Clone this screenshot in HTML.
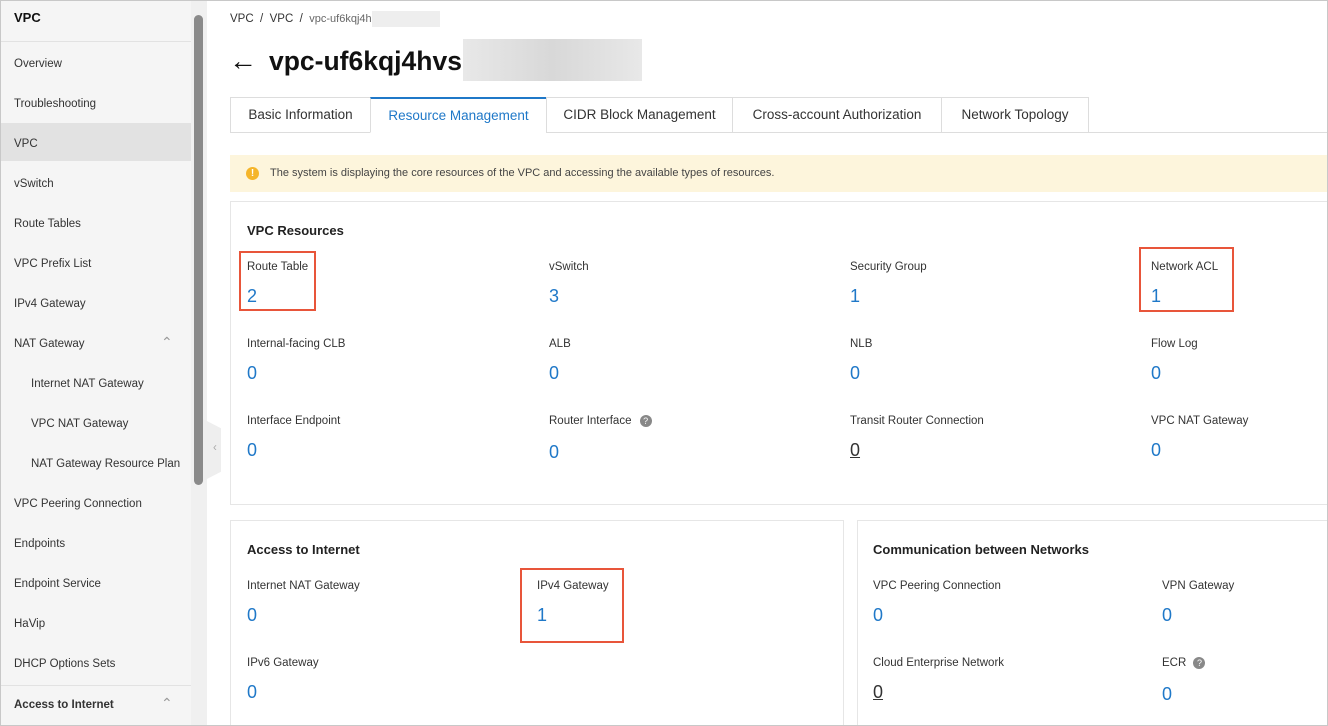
<!DOCTYPE html>
<html><head><style>
*{box-sizing:border-box;margin:0;padding:0}
html,body{width:1328px;height:726px;overflow:hidden}
body{font-family:"Liberation Sans",sans-serif;background:#fff;color:#333}
#w{position:relative;width:1328px;height:726px;overflow:hidden;border:1px solid #c8c8c8}
.sb{position:absolute;left:0;top:0;width:190px;height:726px;background:#f5f5f5}
.sb div{position:absolute;left:13px;font-size:11.5px;color:#333}
.sel{position:absolute;left:0;top:122px;width:190px;height:38px;background:#e2e2e2}
.scroll{position:absolute;left:193px;top:14px;width:9px;height:470px;background:#8a8a8a;border-radius:5px}
.track{position:absolute;left:190px;top:0;width:16px;height:726px;background:#f0f0f0}
.a{position:absolute;font-size:11.5px;white-space:nowrap}
.card{position:absolute;border:1px solid #e6e6e6;background:#fff}
.l{position:absolute;font-size:11.5px;color:#333;white-space:nowrap}
.n{position:absolute;font-size:18px;color:#1f78c8}
.h{position:absolute;font-size:13px;font-weight:bold;color:#222}
.red{position:absolute;border:2px solid #e8553a}
.tab{position:absolute;top:96px;height:36px;border:1px solid #ddd;font-size:13.5px;color:#333;text-align:center;line-height:34px;background:#fff;white-space:nowrap}
</style></head><body><div id="w">
<div class="sb">
<div style="top:9px;font-weight:bold;font-size:13px;color:#111">VPC</div>
<div style="left:0;top:40px;width:190px;height:1px;background:#e2e2e2"></div>
<span class="sel"></span>
<div style="top:57px">Overview</div>
<div style="top:97px">Troubleshooting</div>
<div style="top:137px">VPC</div>
<div style="top:177px">vSwitch</div>
<div style="top:217px">Route Tables</div>
<div style="top:257px">VPC Prefix List</div>
<div style="top:297px">IPv4 Gateway</div>
<div style="top:337px">NAT Gateway</div>
<div style="top:333px;left:160px;font-size:14px;color:#999">&#8963;</div>
<div style="top:377px;left:30px">Internet NAT Gateway</div>
<div style="top:417px;left:30px">VPC NAT Gateway</div>
<div style="top:457px;left:30px">NAT Gateway Resource Plan</div>
<div style="top:497px">VPC Peering Connection</div>
<div style="top:537px">Endpoints</div>
<div style="top:577px">Endpoint Service</div>
<div style="top:617px">HaVip</div>
<div style="top:657px">DHCP Options Sets</div>
<div style="left:0;top:684px;width:190px;height:1px;background:#e2e2e2"></div>
<div style="top:698px;font-weight:bold">Access to Internet</div>
<div style="top:694px;left:160px;font-size:14px;color:#999">&#8963;</div>
</div>
<div class="track"></div>
<div class="scroll"></div>
<div style="position:absolute;left:202px;top:418px;width:18px;height:62px;background:#eee;clip-path:polygon(0 0,100% 15%,100% 85%,0 100%)"></div>
<div class="a" style="left:212px;top:441px;color:#aaa">&lsaquo;</div>
<div class="a" style="left:229px;top:10px;color:#333;font-size:11.5px">VPC &nbsp;/&nbsp; VPC &nbsp;/&nbsp; <span style="color:#666;font-size:11px">vpc-uf6kqj4h</span><span style="display:inline-block;vertical-align:middle;width:68px;height:16px;background:#eee"></span></div>
<div class="a" style="left:228px;top:44px;font-size:28px;font-weight:bold;color:#111">&larr;</div>
<div class="a" style="left:268px;top:45px;font-size:26.5px;font-weight:bold;color:#111">vpc-uf6kqj4hvs</div>
<div style="position:absolute;left:462px;top:38px;width:179px;height:42px;background:linear-gradient(90deg,#e8e8e8,#d8d8d8 50%,#e8e8e8)"></div>
<div class="tab" style="left:229px;width:141px">Basic Information</div>
<div class="tab" style="left:369px;width:177px;border-top:2px solid #1f78c8;border-bottom-color:#fff;color:#1f78c8">Resource Management</div>
<div class="tab" style="left:545px;width:187px">CIDR Block Management</div>
<div class="tab" style="left:731px;width:210px">Cross-account Authorization</div>
<div class="tab" style="left:940px;width:148px">Network Topology</div>
<div style="position:absolute;left:1087px;top:131px;width:241px;height:1px;background:#ddd"></div>
<div style="position:absolute;left:229px;top:154px;width:1099px;height:37px;background:#fdf5dc"></div>
<div style="position:absolute;left:245px;top:166px;width:13px;height:13px;border-radius:50%;background:#f5b52a;color:#fff;font-size:10px;font-weight:bold;text-align:center;line-height:13px">!</div>
<div class="a" style="left:269px;top:166px;font-size:11px;color:#444">The system is displaying the core resources of the VPC and accessing the available types of resources.</div>
<div class="card" style="left:229px;top:200px;width:1105px;height:304px"></div>
<div class="h" style="left:246px;top:222px">VPC Resources</div>
<div class="l" style="left:246px;top:260px">Route Table</div><div class="n" style="left:246px;top:285px">2</div>
<div class="l" style="left:548px;top:260px">vSwitch</div><div class="n" style="left:548px;top:285px">3</div>
<div class="l" style="left:849px;top:260px">Security Group</div><div class="n" style="left:849px;top:285px">1</div>
<div class="l" style="left:1150px;top:260px">Network ACL</div><div class="n" style="left:1150px;top:285px">1</div>
<div class="l" style="left:246px;top:337px">Internal-facing CLB</div><div class="n" style="left:246px;top:362px">0</div>
<div class="l" style="left:548px;top:337px">ALB</div><div class="n" style="left:548px;top:362px">0</div>
<div class="l" style="left:849px;top:337px">NLB</div><div class="n" style="left:849px;top:362px">0</div>
<div class="l" style="left:1150px;top:337px">Flow Log</div><div class="n" style="left:1150px;top:362px">0</div>
<div class="l" style="left:246px;top:414px">Interface Endpoint</div><div class="n" style="left:246px;top:439px">0</div>
<div class="l" style="left:548px;top:414px">Router Interface <span style="display:inline-block;width:12px;height:12px;border-radius:50%;background:#888;color:#fff;font-size:9px;text-align:center;line-height:12px;margin-left:5px">?</span></div><div class="n" style="left:548px;top:441px">0</div>
<div class="l" style="left:849px;top:414px">Transit Router Connection</div><div class="n" style="left:849px;top:439px;color:#333;text-decoration:underline">0</div>
<div class="l" style="left:1150px;top:414px">VPC NAT Gateway</div><div class="n" style="left:1150px;top:439px">0</div>
<div class="card" style="left:229px;top:519px;width:614px;height:220px"></div>
<div class="h" style="left:246px;top:541px">Access to Internet</div>
<div class="l" style="left:246px;top:579px">Internet NAT Gateway</div><div class="n" style="left:246px;top:604px">0</div>
<div class="l" style="left:536px;top:579px">IPv4 Gateway</div><div class="n" style="left:536px;top:604px">1</div>
<div class="l" style="left:246px;top:656px">IPv6 Gateway</div><div class="n" style="left:246px;top:681px">0</div>
<div class="card" style="left:856px;top:519px;width:480px;height:220px"></div>
<div class="h" style="left:872px;top:541px">Communication between Networks</div>
<div class="l" style="left:872px;top:579px">VPC Peering Connection</div><div class="n" style="left:872px;top:604px">0</div>
<div class="l" style="left:1161px;top:579px">VPN Gateway</div><div class="n" style="left:1161px;top:604px">0</div>
<div class="l" style="left:872px;top:656px">Cloud Enterprise Network</div><div class="n" style="left:872px;top:681px;color:#333;text-decoration:underline">0</div>
<div class="l" style="left:1161px;top:656px">ECR <span style="display:inline-block;width:12px;height:12px;border-radius:50%;background:#888;color:#fff;font-size:9px;text-align:center;line-height:12px;margin-left:4px">?</span></div><div class="n" style="left:1161px;top:683px">0</div>
<div class="red" style="left:238px;top:250px;width:77px;height:60px"></div>
<div class="red" style="left:1138px;top:246px;width:95px;height:65px"></div>
<div class="red" style="left:519px;top:567px;width:104px;height:75px"></div>
</div></body></html>
